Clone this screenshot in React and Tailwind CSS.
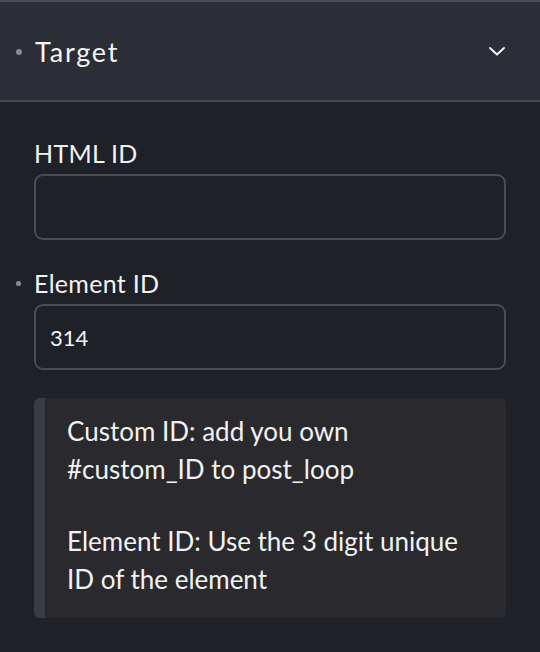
import React from 'react';

const Field = ({ label, value, marked, className = '' }) => (
  <div className={`flex flex-col ${className}`}>
    <div className="relative flex items-center h-[30px]">
      {marked && <span className="absolute left-[-18px] top-[13px] w-[5px] h-[5px] rounded-full bg-[#8a8c92]" />}
      <span className="text-[25px] tracking-[0.3px] text-[#f2f2f3] leading-none">{label}</span>
    </div>
    <div className="mt-[6px] h-[66px] rounded-[9px] border-2 border-[#4a4c53] flex items-center px-[14px] text-[22px] text-[#f4f4f5]">
      {value}
    </div>
  </div>
);

export default function App() {
  return (
    <div className="w-[540px] h-[652px] bg-[#1f2128] flex flex-col" style={{ fontFamily: 'Lato, "Noto Sans", sans-serif' }}>
      {/* header */}
      <div className="relative h-[102px] bg-[#2b2e36] border-t-2 border-b-2 border-t-[#4b4e56] border-b-[#464950] flex items-center pl-[35px] pr-[34px]">
        <span className="absolute left-[16px] top-[47px] w-[6px] h-[6px] rounded-full bg-[#8a8c92]" />
        <span className="text-[27px] tracking-[1.8px] text-[#f4f4f5] leading-none">Target</span>
        <svg className="ml-auto" width="18" height="12" viewBox="0 0 18 12" fill="none">
          <path d="M2 3l7 6.5L16 3" stroke="#f4f4f5" strokeWidth="2" strokeLinecap="round" strokeLinejoin="round" />
        </svg>
      </div>

      {/* body */}
      <div className="flex flex-col px-[34px] pt-[36px]">
        <Field label="HTML ID" value="" />
        <Field label="Element ID" value="314" marked className="mt-[28px]" />

        <div className="mt-[28px] flex rounded-[6px] overflow-hidden bg-[#29292e] h-[220px]">
          <div className="w-[11px] bg-[#3b3c42]" />
          <div className="flex-1 pl-[22px] pr-[16px] pt-[14px] text-[26px] leading-[38px] text-[#f2f2f3]">
            <p>Custom ID: add you own<br />#custom_ID to post_loop</p>
            <p className="mt-[34px]">Element ID: Use the 3 digit unique<br />ID of the element</p>
          </div>
        </div>
      </div>
    </div>
  );
}
